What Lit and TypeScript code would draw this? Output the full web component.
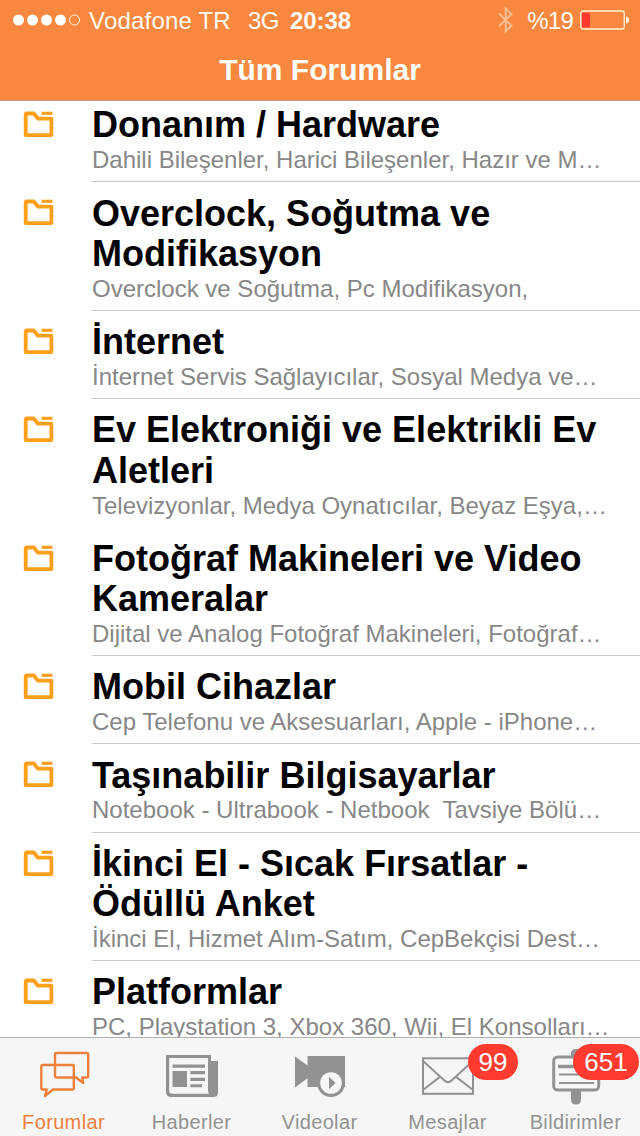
import { LitElement, html, css, svg } from "lit";
import { customElement } from "lit/decorators.js";
import { classMap } from "lit/directives/class-map.js";

interface Forum {
  title: string[];
  about: string;
  plain?: boolean;
}

const FORUMS: Forum[] = [
  { title: ["Donanım / Hardware"], about: "Dahili Bileşenler, Harici Bileşenler, Hazır ve M…" },
  { title: ["Overclock, Soğutma ve", "Modifikasyon"], about: "Overclock ve Soğutma, Pc Modifikasyon," },
  { title: ["İnternet"], about: "İnternet Servis Sağlayıcılar, Sosyal Medya ve…" },
  { title: ["Ev Elektroniği ve Elektrikli Ev", "Aletleri"], about: "Televizyonlar, Medya Oynatıcılar, Beyaz Eşya,…", plain: true },
  { title: ["Fotoğraf Makineleri ve Video", "Kameralar"], about: "Dijital ve Analog Fotoğraf Makineleri, Fotoğraf…" },
  { title: ["Mobil Cihazlar"], about: "Cep Telefonu ve Aksesuarları, Apple - iPhone…" },
  { title: ["Taşınabilir Bilgisayarlar"], about: "Notebook - Ultrabook - Netbook  Tavsiye Bölü…" },
  { title: ["İkinci El - Sıcak Fırsatlar -", "Ödüllü Anket"], about: "İkinci El, Hizmet Alım-Satım, CepBekçisi Dest…" },
  { title: ["Platformlar"], about: "PC, Playstation 3, Xbox 360, Wii, El Konsolları…" },
];

const folderIcon = html`<svg width="32" height="27" viewBox="0 0 32 27" fill="none" stroke="#fca01c" stroke-width="3.8" stroke-linejoin="round">
  <path d="M3.6 2.500H10.800L15 7.700H28.400V24.100H2.700V3.400Q2.700 2.500 3.600 2.500Z"/>
  <path d="M18.600 2.300H29.400" stroke-width="3.200"/>
</svg>`;

const TABS = [
  {
    label: "Forumlar",
    badge: "",
    icon: svg`<g fill="none" stroke="#ee803c" stroke-width="2.4" stroke-linejoin="round">
      <path d="M56.300 23H87Q88.200 23 88.200 24.200V46.300Q88.200 47.500 87 47.500H82.300L83.200 53L76.200 47.500H56.300Q55 47.500 55 46.300V24.200Q55 23 56.300 23Z"/>
      <path d="M42.700 35H72.500Q73.800 35 73.800 36.300V58.300Q73.800 59.500 72.500 59.500H53L45 66L46.800 59.500H42.700Q41.300 59.500 41.300 58.300V36.300Q41.300 35 42.700 35Z"/>
    </g>`,
  },
  {
    label: "Haberler",
    badge: "",
    icon: svg`<g fill="#929292">
      <path fill-rule="evenodd" d="M38 25H83V31H90V62.500Q90 67 85.500 67H43.500Q38 67 38 61.500ZM41.200 28V60.500Q41.200 63.800 44.500 63.800H81Q80 62.500 80 60V28Z"/>
      <path d="M44.500 34.500H77V37.700H44.500ZM44.500 41H59V57H44.500ZM62.300 41H77V44.200H62.300ZM62.300 47.700H77V50.900H62.300ZM62.300 54.200H74V57.300H62.300Z"/>
    </g>`,
  },
  {
    label: "Videolar",
    badge: "",
    icon: svg`<path d="M39 26.500L51.500 35.500V26H89V57H51.500V48.300L39 57.500Z" fill="#929292"/>
      <circle cx="75" cy="53" r="14" fill="#929292"/>
      <circle cx="75" cy="53" r="10.800" fill="#f6f6f6"/>
      <path d="M73 46.800V59.200L79.500 53Z" fill="#929292"/>`,
  },
  {
    label: "Mesajlar",
    badge: "99",
    icon: svg`<g fill="none" stroke="#929292" stroke-width="2">
      <rect x="39" y="28.300" width="50" height="35.500"/>
      <path d="M39 31L60.500 50.500Q64 53.800 67.500 50.500L89 31M39 60L56.200 46.600M89 60L71.800 46.600"/>
    </g>`,
  },
  {
    label: "Bildirimler",
    badge: "651",
    icon: svg`<path d="M59 28V23.500Q59 19 64 19Q69 19 69 23.500V28ZM59 60H69V69.500Q69 74.500 64 74.500Q59 74.500 59 69.500Z" fill="#929292"/>
      <rect x="41.700" y="27" width="45" height="33" rx="4" fill="#f7f7f7" stroke="#929292" stroke-width="3"/>
      <path d="M46 36.500H83" stroke="#929292" stroke-width="3.600"/>
      <path d="M47 44.500H83M47 53H82" stroke="#929292" stroke-width="2"/>`,
  },
];

@customElement("status-bar")
class StatusBar extends LitElement {
  static styles = css`
    :host { display: flex; align-items: center; height: 40px; padding: 0 11px 0 13px; color: #fffaf3; font-size: 24px; line-height: 40px; white-space: pre; }
    span { padding-top: 1px; }
    .dots { margin-right: 9px; }
    .carrier { letter-spacing: 0.2px; width: 159px; }
    .network { width: 42px; letter-spacing: -0.5px; }
    .clock { font-weight: bold; letter-spacing: -0.1px; }
    .bluetooth { margin-left: auto; margin-right: 14px; }
    .charge { letter-spacing: -0.8px; margin-right: 7px; }
    svg { flex: none; }
  `;
  render() {
    return html`
      <svg class="dots" width="67" height="12" viewBox="0 0 67 12" fill="#fffdf8">
        <circle cx="5.500" cy="6" r="5.500"/><circle cx="19.500" cy="6" r="5.500"/><circle cx="33.500" cy="6" r="5.500"/><circle cx="47.500" cy="6" r="5.500"/>
        <circle cx="61.500" cy="6" r="5" fill="none" stroke="#fff3e2" stroke-width="1"/>
      </svg>
      <span class="carrier">Vodafone TR</span>
      <span class="network">3G</span>
      <span class="clock">20:38</span>
      <svg class="bluetooth" width="17" height="28" viewBox="-1.500 0 17 28" fill="none" stroke="#fcbd91" stroke-width="2">
        <path d="M1.500 7.500L14 19.800L8.200 25.200V2.600L14 8L1.500 20.300"/>
      </svg>
      <span class="charge">%19</span>
      <svg width="49" height="20" viewBox="0 0 49 20">
        <rect x=".75" y="1" width="43.500" height="18" rx="2.500" fill="none" stroke="#fff1dc" stroke-width="1.300"/>
        <rect x="2" y="2.800" width="8" height="14.700" fill="#ff3b30"/>
        <path d="M46 6.500Q49 7 49 10Q49 13 46 13.500Z" fill="#fff8ec"/>
      </svg>
    `;
  }
}

@customElement("forum-row")
class ForumRow extends LitElement {
  static properties = { forum: { attribute: false } };
  declare forum: Forum;
  static styles = css`
    :host { display: flex; box-sizing: border-box; padding-left: 22.500px; background: #fff; }
    .icon { flex: none; width: 69.500px; padding-top: 17px; }
    .icon svg { display: block; }
    .body { flex: 1; min-width: 0; padding-top: 11.200px; padding-bottom: 7.200px; border-bottom: 1px solid #c8c7cc; }
    .plain { border-bottom-color: transparent; }
    .title { font-size: 36px; font-weight: bold; line-height: 40.400px; color: #000; white-space: pre; }
    .about { padding-top: 0.400px; font-size: 24px; line-height: 28px; color: #878787; white-space: pre; }
  `;
  render() {
    return html`
      <div class="icon">${folderIcon}</div>
      <div class=${classMap({ body: true, plain: !!this.forum.plain })}>
        ${this.forum.title.map((line) => html`<div class="title">${line}</div>`)}
        <div class="about">${this.forum.about}</div>
      </div>
    `;
  }
}

@customElement("tab-bar")
class TabBar extends LitElement {
  static styles = css`
    :host { display: grid; grid-template-columns: repeat(5, 128px); justify-content: center; height: 99px; box-sizing: border-box; border-top: 1px solid #b0b0b0; background: #f6f6f6; }
    .tab { position: relative; display: flex; flex-direction: column; align-items: center; color: #929292; }
    .glyph { display: block; margin-top: -8px; }
    .label { font-size: 20px; line-height: 24px; margin-top: -2px; margin-right: 1px; letter-spacing: 0.35px; }
    .active { color: #ee803c; }
    .badge { position: absolute; top: 6px; box-sizing: border-box; height: 36px; border-radius: 18px; background: #ff3b30; color: #fff; font-size: 26px; line-height: 36px; text-align: center; }
    .narrow { left: 84px; width: 50px; }
    .wide { left: 61px; width: 66px; }
  `;
  render() {
    return html`${TABS.map(
      (tab, index) => html`<div class=${classMap({ tab: true, active: index === 0 })}>
        <svg class="glyph" width="128" height="82" viewBox="0 0 128 82">${tab.icon}</svg>
        <span class="label">${tab.label}</span>
        ${tab.badge
          ? html`<span class=${classMap({ badge: true, narrow: tab.badge.length < 3, wide: tab.badge.length > 2 })}>${tab.badge}</span>`
          : ""}
      </div>`,
    )}`;
  }
}

@customElement("app-root")
class AppRoot extends LitElement {
  static styles = css`
    :host { display: flex; flex-direction: column; width: 640px; height: 1136px; overflow: hidden; background: #fff; font-family: "Liberation Sans", Arial, sans-serif; }
    .header { flex: none; height: 101px; box-sizing: border-box; background: #f8883f; border-bottom: 1px solid #d29c7e; }
    .heading { margin: 0; font-size: 30px; line-height: 59px; font-weight: bold; color: #fffdf8; text-align: center; }
    .list { flex: 1; min-height: 0; overflow: hidden; }
    .rows { margin-top: -6.800px; }
    tab-bar { flex: none; }
  `;
  render() {
    return html`
      <div class="header">
        <status-bar></status-bar>
        <h1 class="heading">Tüm Forumlar</h1>
      </div>
      <div class="list">
        <div class="rows">${FORUMS.map((forum) => html`<forum-row .forum=${forum}></forum-row>`)}</div>
      </div>
      <tab-bar></tab-bar>
    `;
  }
}
